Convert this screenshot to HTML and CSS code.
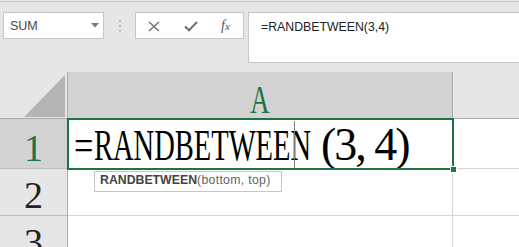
FILE: index.html
```html
<!DOCTYPE html>
<html lang="en">

<head>
    <meta charset="UTF-8">
    <meta name="viewport" content="width=device-width, initial-scale=1.0">
    <title>RANDBETWEEN</title>
    <link rel="stylesheet" href="styles.css">
</head>

<body>
    <div id="toolbar">
        <div class="name-box">
            <span>SUM</span>
            <svg width="8" height="5" viewBox="0 0 8 5"><polygon points="0,0 8,0 4,4.5" fill="#7a7a7a" /></svg>
        </div>

        <div class="grip"><i></i><i></i><i></i></div>

        <div class="formula-buttons">
            <svg class="icon" width="12" height="11" viewBox="0 0 12 11">
                <path d="M1 1 L11 10 M11 1 L1 10" stroke="#707070" stroke-width="1.4" fill="none" />
            </svg>
            <svg class="icon" width="14" height="11" viewBox="0 0 14 11">
                <path d="M1 5.5 L5 9.3 L13 1" stroke="#707070" stroke-width="2" fill="none" />
            </svg>
            <span class="fx">f<small>x</small></span>
        </div>

        <div class="formula-bar">=RANDBETWEEN(3,4)</div>
    </div>

    <div id="sheet">
        <div class="corner"><div class="select-all"></div></div>
        <div class="col-head selected"><span class="narrow">A</span></div>
        <div class="col-head"></div>

        <div class="row-head selected">1</div>
        <div class="cell active">
            <span class="eq">=</span>
            <span class="fname">RANDBETWEEN</span>
            <span class="args">(3, 4)</span>
            <span class="caret"></span>
        </div>
        <div class="cell"></div>

        <div class="row-head">2</div>
        <div class="cell colA"></div>
        <div class="cell"></div>

        <div class="row-head">3</div>
        <div class="cell colA"></div>
        <div class="cell"></div>

        <div class="tooltip"><b>RANDBETWEEN</b><span>(bottom, top)</span></div>
    </div>
</body>

</html>
```

FILE: styles.css
```css
body {
    margin: 0;
    padding-top: 1px;
    background-color: #e6e6e6;
    font-family: "Liberation Sans", Arial, sans-serif;
    height: 246px;
    overflow: hidden;
}

#toolbar {
    display: flex;
    align-items: flex-start;
    border-top: 1px solid #c8c8c8;
    padding: 10px 0 0 3px;
}

.name-box {
    box-sizing: border-box;
    width: 101px;
    height: 27px;
    background: white;
    border: 1px solid #c6c6c6;
    display: flex;
    align-items: center;
    justify-content: space-between;
    padding: 0 4px 0 6px;
    font-size: 12.5px;
    color: #444;
}

.name-box svg {
    margin-top: -1px;
}

.grip {
    width: 31px;
    height: 27px;
    display: flex;
    flex-direction: column;
    align-items: center;
    justify-content: center;
    gap: 3px;
}

.grip i {
    width: 2px;
    height: 2px;
    background: #b9b9b9;
}

.formula-buttons {
    box-sizing: border-box;
    width: 109px;
    height: 27px;
    background: white;
    border: 1px solid #c6c6c6;
    display: flex;
    align-items: center;
    padding-left: 12px;
    gap: 24px;
}

.icon {
    margin-top: 2px;
}

.fx {
    font-family: "Liberation Serif", serif;
    font-style: italic;
    font-size: 14px;
    color: #555;
    margin-left: -1px;
    margin-top: 1px;
}

.fx small {
    font-size: 11px;
}

.formula-bar {
    box-sizing: border-box;
    flex: 1;
    height: 51px;
    margin-left: 4px;
    background: white;
    border: 1px solid #c6c6c6;
    border-right: none;
    padding: 6px 0 0 12px;
    font-size: 12.3px;
    line-height: 16px;
    color: #222;
}

#sheet {
    position: relative;
    margin-top: 9px;
    display: grid;
    grid-template-columns: 68px 385px 1fr;
    grid-template-rows: 47px 50px 47px 47px;
}

#sheet > div {
    box-sizing: border-box;
}

.corner {
    border-right: 1px solid #ababab;
    border-bottom: 1px solid #ababab;
    display: flex;
    justify-content: flex-end;
    align-items: flex-end;
    padding: 0 2px 1px 0;
}

.select-all {
    width: 41px;
    height: 42px;
    background: #b4b4b4;
    clip-path: polygon(100% 0, 100% 100%, 0 100%);
}

.col-head {
    border-bottom: 1px solid #ababab;
}

.col-head.selected {
    background: #d2d2d2;
    border-right: 1px solid #ababab;
    border-bottom-color: #217346;
    padding-top: 7px;
    text-align: center;
    font-family: "Liberation Serif", serif;
    font-size: 41px;
    line-height: 41px;
    color: #217346;
}

.narrow {
    display: inline-block;
    transform: scaleX(0.65);
}

.row-head {
    border-right: 1px solid #ababab;
    border-bottom: 1px solid #bdbdbd;
    display: flex;
    justify-content: center;
    align-items: flex-end;
    padding-bottom: 1px;
    font-family: "Liberation Serif", serif;
    font-size: 38px;
    line-height: 38px;
    color: #222;
}

.row-head.selected {
    background: #d2d2d2;
    color: #217346;
}

.cell {
    background: white;
    border-bottom: 1px solid #d4d4d4;
}

.colA {
    border-right: 1px solid #d4d4d4;
}

.cell.active {
    position: relative;
    z-index: 2;
    border: none;
    outline: 2px solid #217346;
    outline-offset: -1px;
    display: flex;
    align-items: baseline;
    padding: 3px 0 0 6px;
    white-space: nowrap;
    font-family: "Liberation Serif", serif;
    line-height: 46px;
    color: #000;
}

.cell.active::after {
    content: "";
    position: absolute;
    right: -4px;
    bottom: -4px;
    width: 5px;
    height: 5px;
    background: #217346;
    border: 1px solid white;
}

.eq {
    display: inline-block;
    width: 20px;
    font-size: 44px;
    transform: scaleX(0.78);
    transform-origin: left;
}

.fname {
    display: inline-block;
    width: 217px;
    font-size: 44px;
    transform: scaleX(0.648);
    transform-origin: left;
}

.args {
    margin-left: 10px;
    font-size: 46px;
    letter-spacing: -2px;
}

.caret {
    position: absolute;
    left: 226px;
    top: 2px;
    width: 1px;
    height: 47px;
    background: #7f7f7f;
}

.tooltip {
    position: absolute;
    left: 94px;
    top: 99px;
    z-index: 3;
    width: 188px;
    height: 21px;
    background: white;
    border: 1px solid #c6c6c6;
    padding-left: 5px;
    font-size: 12.3px;
    line-height: 16px;
    color: #444;
}

.tooltip span {
    color: #666;
    letter-spacing: 0.3px;
}
```
